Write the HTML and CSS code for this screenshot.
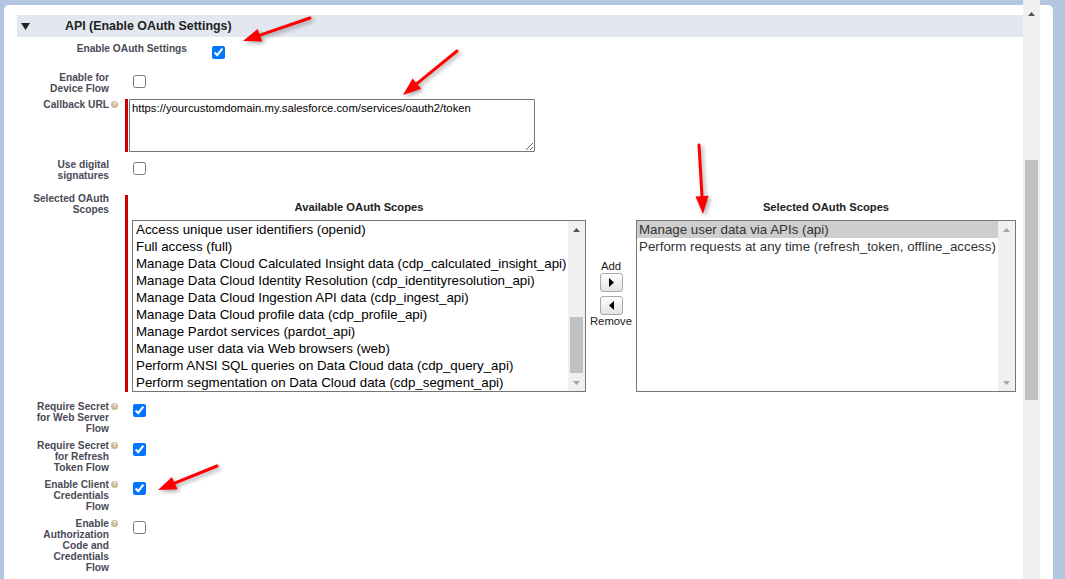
FILE: index.html
```html
<!DOCTYPE html>
<html>
<head>
<meta charset="UTF-8">
<title>API (Enable OAuth Settings)</title>
<link rel="stylesheet" href="styles.css">
</head>
<body>
<div class="page">
  <div class="content">
    <div class="section-head">
      <svg class="twist" width="9" height="7" viewBox="0 0 9 7"><path d="M0 0 L9 0 L4.5 7 Z" fill="#222"/></svg>
      <h3>API (Enable OAuth Settings)</h3>
    </div>

    <div class="row row-wide">
      <div class="label">Enable OAuth Settings</div>
      <div></div>
      <div class="field"><input type="checkbox" checked></div>
    </div>

    <div class="row row-device">
      <div class="label">Enable for<br>Device Flow</div>
      <div></div>
      <div class="field"><input type="checkbox"></div>
    </div>

    <div class="row row-callback">
      <div class="label">Callback URL</div>
      <div><span class="help">?</span></div>
      <div class="field req">
        <textarea>https://yourcustomdomain.my.salesforce.com/services/oauth2/token</textarea>
      </div>
    </div>

    <div class="row row-sig">
      <div class="label">Use digital<br>signatures</div>
      <div></div>
      <div class="field"><input type="checkbox"></div>
    </div>

    <div class="row row-scopes">
      <div class="label">Selected OAuth<br>Scopes</div>
      <div></div>
      <div class="field req scopes">
        <div class="scope-col available">
          <div class="col-head">Available OAuth Scopes</div>
          <div class="listbox">
            <div class="opts">
              <div class="opt">Access unique user identifiers (openid)</div>
              <div class="opt">Full access (full)</div>
              <div class="opt">Manage Data Cloud Calculated Insight data (cdp_calculated_insight_api)</div>
              <div class="opt">Manage Data Cloud Identity Resolution (cdp_identityresolution_api)</div>
              <div class="opt">Manage Data Cloud Ingestion API data (cdp_ingest_api)</div>
              <div class="opt">Manage Data Cloud profile data (cdp_profile_api)</div>
              <div class="opt">Manage Pardot services (pardot_api)</div>
              <div class="opt">Manage user data via Web browsers (web)</div>
              <div class="opt">Perform ANSI SQL queries on Data Cloud data (cdp_query_api)</div>
              <div class="opt">Perform segmentation on Data Cloud data (cdp_segment_api)</div>
            </div>
            <div class="vscroll">
              <div class="sb-btn"><svg width="7" height="4" viewBox="0 0 7 4"><path d="M0 4 L3.5 0 L7 4 Z" fill="#505050"/></svg></div>
              <div class="sb-track"><div class="thumb list-thumb"></div></div>
              <div class="sb-btn"><svg width="7" height="4" viewBox="0 0 7 4"><path d="M0 0 L3.5 4 L7 0 Z" fill="#a3a3a3"/></svg></div>
            </div>
          </div>
        </div>

        <div class="mover">
          <div>Add</div>
          <button class="mv-btn"><svg width="5" height="9" viewBox="0 0 5 9"><path d="M0 0 L5 4.5 L0 9 Z" fill="#000"/></svg></button>
          <button class="mv-btn mv-remove"><svg width="5" height="9" viewBox="0 0 5 9"><path d="M5 0 L0 4.5 L5 9 Z" fill="#000"/></svg></button>
          <div>Remove</div>
        </div>

        <div class="scope-col selected">
          <div class="col-head">Selected OAuth Scopes</div>
          <div class="listbox">
            <div class="opts">
              <div class="opt picked">Manage user data via APIs (api)</div>
              <div class="opt">Perform requests at any time (refresh_token, offline_access)</div>
            </div>
            <div class="vscroll">
              <div class="sb-btn"><svg width="7" height="4" viewBox="0 0 7 4"><path d="M0 4 L3.5 0 L7 4 Z" fill="#a3a3a3"/></svg></div>
              <div class="sb-track"></div>
              <div class="sb-btn"><svg width="7" height="4" viewBox="0 0 7 4"><path d="M0 0 L3.5 4 L7 0 Z" fill="#a3a3a3"/></svg></div>
            </div>
          </div>
        </div>
      </div>
    </div>

    <div class="row row-secret">
      <div class="label">Require Secret<br>for Web Server<br>Flow</div>
      <div><span class="help">?</span></div>
      <div class="field"><input type="checkbox" checked></div>
    </div>

    <div class="row">
      <div class="label">Require Secret<br>for Refresh<br>Token Flow</div>
      <div><span class="help">?</span></div>
      <div class="field"><input type="checkbox" checked></div>
    </div>

    <div class="row">
      <div class="label">Enable Client<br>Credentials<br>Flow</div>
      <div><span class="help">?</span></div>
      <div class="field"><input type="checkbox" checked></div>
    </div>

    <div class="row">
      <div class="label">Enable<br>Authorization<br>Code and<br>Credentials<br>Flow</div>
      <div><span class="help">?</span></div>
      <div class="field"><input type="checkbox"></div>
    </div>
  </div>

  <div class="page-scroll">
    <div class="sb-btn page-up"><svg width="7" height="4" viewBox="0 0 7 4"><path d="M0 4 L3.5 0 L7 4 Z" fill="#505050"/></svg></div>
    <div class="sb-track"><div class="thumb page-thumb"></div></div>
  </div>
</div>

<!-- red callout arrows drawn over the screenshot -->
<svg class="marks" width="1065" height="579" viewBox="0 0 1065 579">
  <g stroke="#f00" stroke-width="3" fill="none" stroke-linecap="round">
    <line x1="310" y1="18" x2="260" y2="35.2"/>
    <line x1="457" y1="51" x2="416.9" y2="83.6"/>
    <line x1="699" y1="145" x2="702" y2="196"/>
    <line x1="217" y1="466" x2="174.7" y2="483.2"/>
  </g>
  <g fill="#f00">
    <polygon points="243,41 262.4,41.4 257.6,29"/>
    <polygon points="403,95 421.2,88.7 412.6,78.5"/>
    <polygon points="703,214 708.5,195.7 695.5,196.4"/>
    <polygon points="158,490 177.5,489.3 171.9,477.1"/>
  </g>
</svg>
</body>
</html>
```

FILE: styles.css
```css
  body {
    margin: 0;
    height: 579px;
    overflow: hidden;
    position: relative;
    background-color: #b3c6e0;
    font-family: "Liberation Sans", Arial, Helvetica, sans-serif;
  }

  .page {
    display: flex;
    height: 574px;
    margin: 5px 12px 0 4px;
    padding-right: 13px;
    background-color: #fff;
    border-radius: 5px 5px 0 0;
  }

  .content {
    flex: 1;
    padding: 10px 0 0 13px;
  }

  .section-head {
    display: flex;
    align-items: center;
    height: 22px;
    background-color: #e3e7ef;
  }

  .twist {
    margin-left: 4px;
  }

  .section-head h3 {
    margin: 0 0 0 35px;
    font-size: 12.4px;
    color: #222;
  }

  /* form rows */
  .row {
    display: grid;
    grid-template-columns: 92px 16px 1fr;
    align-items: start;
    margin-top: 6px;
  }

  .row-wide {
    grid-template-columns: 170px 17px 1fr;
  }

  .row-device { margin-top: 13px; }
  .row-callback { margin-top: 5px; }
  .row-sig { margin-top: 7px; }
  .row-scopes { margin-top: 12px; }
  .row-secret { margin-top: 9px; }

  .label {
    font-size: 10.2px;
    line-height: 11px;
    font-weight: bold;
    color: #4a4a56;
    text-align: right;
  }

  .help {
    display: block;
    width: 7px;
    height: 7px;
    margin: 2px 0 0 2px;
    border-radius: 50%;
    background-color: #c9b798;
    color: #fff;
    font-size: 6px;
    line-height: 7px;
    font-weight: bold;
    text-align: center;
  }

  .field {
    display: flex;
  }

  .field input[type="checkbox"] {
    width: 13px;
    height: 13px;
    margin: 3px 0 0 8px;
  }

  .req {
    border-left: 3px solid #c00;
    padding-left: 1px;
  }

  textarea {
    width: 406px;
    height: 53px;
    box-sizing: border-box;
    margin: 0;
    padding: 2px;
    border: 1px solid #767676;
    border-radius: 1px;
    font-family: "Liberation Sans", Arial, sans-serif;
    font-size: 11.3px;
    color: #000;
  }

  /* scope picker */
  .scopes {
    margin-top: 2px;
    padding-left: 4px;
    align-items: flex-start;
  }

  .available { width: 454px; }
  .selected { width: 380px; }

  .col-head {
    padding-top: 6px;
    margin-bottom: 6px;
    font-size: 11.2px;
    line-height: 13px;
    font-weight: bold;
    color: #222;
    text-align: center;
  }

  .listbox {
    display: flex;
    height: 172px;
    box-sizing: border-box;
    border: 1px solid #767676;
  }

  .opts {
    flex: 1;
    overflow: hidden;
    white-space: nowrap;
    font-size: 13.33px;
    line-height: 17px;
  }

  .available .opts {
    padding: 0 3px;
    color: #000;
  }

  .selected .opt {
    padding-left: 2px;
    color: #333;
  }

  .opt.picked {
    background-color: #cecece;
  }

  .vscroll {
    display: flex;
    flex-direction: column;
    width: 17px;
    background-color: #f0f0f0;
  }

  .sb-btn {
    display: flex;
    align-items: center;
    justify-content: center;
    height: 17px;
    flex: none;
  }

  .sb-track {
    flex: 1;
    padding: 0 2px;
  }

  .thumb {
    background-color: #c1c1c1;
  }

  .list-thumb {
    margin-top: 79px;
    height: 56px;
  }

  .mover {
    width: 50px;
    padding-top: 65px;
    font-size: 11.3px;
    line-height: 13px;
    color: #222;
    text-align: center;
  }

  .mv-btn {
    display: flex;
    align-items: center;
    justify-content: center;
    width: 23px;
    height: 19px;
    margin: 0 auto;
    padding: 0;
    box-sizing: border-box;
    border: 1px solid #a8a8a8;
    border-radius: 3px;
    background: linear-gradient(#fefefe, #e4e4e4);
  }

  .mv-remove {
    margin-top: 4px;
  }

  /* page scrollbar */
  .page-scroll {
    display: flex;
    flex-direction: column;
    width: 17px;
    height: 579px;
    margin-top: -5px;
    background-color: #f0f0f0;
  }

  .page-up {
    height: 28px;
  }

  .page-thumb {
    margin-top: 132px;
    height: 240px;
  }

  .marks {
    position: absolute;
    left: 0;
    top: 0;
    pointer-events: none;
    filter: drop-shadow(2px 2px 2px rgba(0, 0, 0, 0.35));
  }
```
